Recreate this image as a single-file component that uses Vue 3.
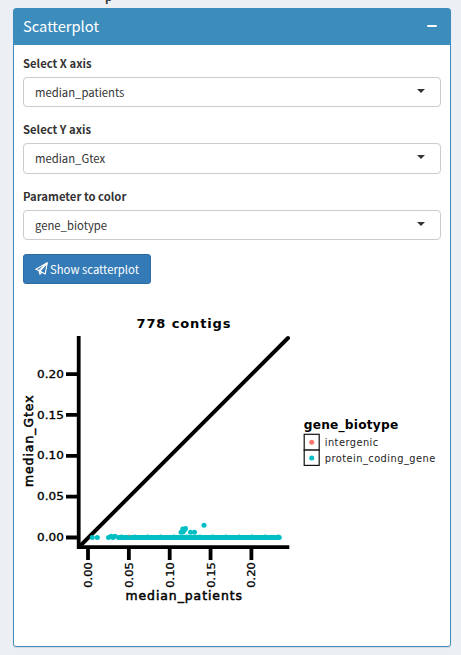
<script setup>
const fields = [
  { label: 'Select X axis', value: 'median_patients' },
  { label: 'Select Y axis', value: 'median_Gtex' },
  { label: 'Parameter to color', value: 'gene_biotype' },
]
const ticks = ['0.00', '0.05', '0.10', '0.15', '0.20'].map((label, i) => ({
  label,
  x: 88 + i * 40.85,
  y: 537.5 - i * 40.85,
}))
const points = [
  [92.3, 537.6], [97.3, 537.6], [108.5, 537.6], [111, 536.3], [115, 536.2], [113, 537.6],
  [181, 532.3], [183, 532], [182.8, 528.9], [185.5, 528.6], [184.5, 530],
  [190.5, 532.3], [194.5, 532.3], [204, 525.2],
]
for (let i = 0; i < 161; i++) {
  points.push([118.5 + i * 1.005, 537.5 - (i % 13 === 3 ? 0.4 : 0)])
}
</script>

<template>
  <main class="page">
    <div class="previous">p</div>
    <section class="box">
      <header class="box-header">
        <h3>Scatterplot</h3>
        <button class="collapse" aria-label="Collapse"><span></span></button>
      </header>
      <div class="box-body">
        <div v-for="f in fields" :key="f.label" class="group">
          <label>{{ f.label }}</label>
          <div class="select">
            <span>{{ f.value }}</span>
            <svg class="caret" width="8" height="4" viewBox="0 0 8 4"><path d="M0 0H8L4 4Z" fill="#333" /></svg>
          </div>
        </div>
        <button class="show">
          <svg width="13" height="13" viewBox="0 0 13 13" fill="none" stroke="#fff" stroke-width="1.15" stroke-linejoin="round">
            <path d="M12.3 .7L.8 7.2L3.8 8.6L10.2 12L12.3 .7L3.8 8.6L5 12.2L7 10.2" />
            <path d="M12.1 1L5 9.2V12" />
          </svg>
          <span>Show scatterplot</span>
        </button>
        <svg class="plot" width="436" height="350" viewBox="14 296 436 350">
          <text class="bold" x="136.5" y="327.5" font-size="13" textLength="94">778 contigs</text>
          <path d="M79 547L288 338" stroke="#000" stroke-width="3.9" stroke-linecap="round" />
          <circle v-for="(p, i) in points" :key="i" :cx="p[0]" :cy="p[1]" r="2.5" fill="#00bfc4" />
          <path d="M128 535.1h2" stroke="#f8766d" stroke-width=".7" />
          <path d="M78.7 336V548.9M77 547.2H289.3" stroke="#000" stroke-width="3.8" fill="none" />
          <g v-for="t in ticks" :key="t.label">
            <path :d="`M66 ${t.y}H78M${t.x} 548V560`" stroke="#000" stroke-width="3.8" />
            <text class="medium" x="37" :y="t.y + 3.6" font-size="9.8" textLength="26.8" lengthAdjust="spacingAndGlyphs">{{ t.label }}</text>
            <text class="medium" :transform="`translate(${t.x + 4} 587.8) rotate(-90)`" font-size="9.8" textLength="25.8" lengthAdjust="spacingAndGlyphs">{{ t.label }}</text>
          </g>
          <text class="axis" x="125.5" y="599.5" font-size="12.4" textLength="116.5">median_patients</text>
          <text class="axis" transform="translate(32.5 487) rotate(-90)" font-size="12.4" textLength="91.5">median_Gtex</text>
          <text class="bold" x="303.7" y="428.5" font-size="12.2" textLength="94.5">gene_biotype</text>
          <g fill="#fff" stroke="#111" stroke-width="1.2">
            <rect x="304.2" y="434.3" width="15" height="15.8" />
            <rect x="304.2" y="450.1" width="15" height="15.3" />
          </g>
          <circle cx="311.7" cy="442.3" r="2.5" fill="#f8766d" />
          <circle cx="311.7" cy="458.1" r="2.5" fill="#00bfc4" />
          <text class="key" x="324.7" y="446" font-size="9.8" textLength="53.5">intergenic</text>
          <text class="key" x="324.7" y="462" font-size="9.8" textLength="110.5">protein_coding_gene</text>
        </svg>
      </div>
    </section>
  </main>
</template>

<style>
body { background: #ecf0f5; }
</style>

<style scoped>
.page {
  box-sizing: border-box;
  height: 655px;
  padding: 0 10px 8px 13px;
  overflow: hidden;
  display: flex;
  flex-direction: column;
  font-family: "Noto Sans CJK SC", "Open Sans", sans-serif;
  font-size: 11.3px;
  color: #333;
}
.previous {
  height: 12px;
  margin-top: -4px;
  flex: none;
  padding-left: 92px;
  font-weight: 700;
  line-height: 0;
}
.box {
  box-sizing: border-box;
  height: 639px;
  flex: none;
  border: 1px solid #3c8dbc;
  border-radius: 3px;
  background: #fff;
  box-shadow: 0 1px 1px rgba(0, 0, 0, .1);
}
.box-header {
  height: 36px;
  padding: 0 13px 0 9px;
  display: flex;
  align-items: center;
  justify-content: space-between;
  background: #3c8dbc;
  color: #fff;
}
h3 { margin: 0 0 2px; font-size: 14.7px; font-weight: 400; line-height: 18px; }
.collapse { padding: 0; border: 0; background: none; display: flex; }
.collapse span { width: 10px; height: 2px; margin-bottom: 2px; background: #fff; border-radius: 1px; }
.box-body { padding: 9px 9px 0; }
.group { height: 66.3px; }
label { display: block; height: 18px; margin-bottom: 5px; line-height: 19px; font-weight: 700; }
.select {
  box-sizing: border-box;
  height: 30.3px;
  padding: 0 15px 0 11px;
  display: flex;
  align-items: center;
  justify-content: space-between;
  border: 1px solid #ccc;
  border-radius: 4px;
  line-height: 18px;
}
.caret { margin-bottom: 2px; }
.show {
  box-sizing: border-box;
  width: 128px;
  height: 30px;
  margin: 1px 0 0;
  padding: 0 0 0 11px;
  display: flex;
  align-items: center;
  gap: 2px;
  border: 1px solid #2e6da4;
  border-radius: 3px;
  background: #337ab7;
  color: #fff;
  font: inherit;
  line-height: 18px;
  white-space: nowrap;
}
.plot { display: block; margin: 12px -9px 0; font-family: "DejaVu Sans", sans-serif; }
.bold { font-weight: 700; }
.medium { stroke: #000; stroke-width: .3; }
.axis { stroke: #000; stroke-width: .5; }
.key { fill: #222; }
</style>
